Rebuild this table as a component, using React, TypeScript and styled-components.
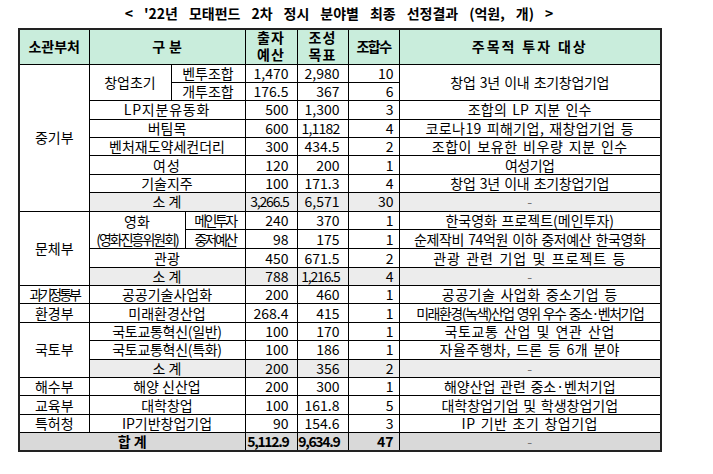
import React from 'react';
import styled, { createGlobalStyle } from 'styled-components';

const Global = createGlobalStyle`
  html, body { margin: 0; padding: 0; background: #fff; }
  body { font-family: "Noto Sans CJK KR", "Noto Sans", sans-serif; color: #000; }
`;

const Page = styled.div`
  width: 713px;
  height: 474px;
  box-sizing: border-box;
  padding: 3px 0 0 18px;
`;

const Title = styled.div`
  width: 642px;
  text-align: center;
  font-weight: 700;
  font-size: 14px;
  line-height: 20px;
  word-spacing: 7.8px;
  margin-bottom: 5px;
`;

const Table = styled.table`
  width: 642px;
  border-collapse: collapse;
  table-layout: fixed;
  border: 2px solid #222;
`;

const Row = styled.tr<{ $h?: number }>`
  height: ${p => p.$h ?? 18.38}px;
`;

type Align = 'left' | 'center' | 'right';
type Shade = 'none' | 'sub' | 'total';

const Th = styled.th<{ $ls?: number }>`
  border: 1px solid #000;
  background: #c9eddc;
  font-family: "Liberation Sans", "Noto Sans CJK KR", sans-serif;
  font-size: 14px;
  line-height: 16.5px;
  font-weight: 700;
  padding: 0;
  text-align: center;
  white-space: nowrap;
  letter-spacing: ${p => p.$ls ?? 0}px;
`;

const Td = styled.td<{ $align?: Align; $shade?: Shade; $ls?: number; $bold?: boolean; $pr?: number; $lh?: number }>`
  border: 1px solid #000;
  font-size: 14px;
  line-height: ${p => p.$lh ?? 17}px;
  padding: 0 ${p => (p.$align === 'right' ? p.$pr ?? 8 : 0)}px 0 0;
  text-align: ${p => p.$align ?? 'center'};
  background: ${p => (p.$shade === 'sub' ? '#ececec' : p.$shade === 'total' ? '#d9d9d9' : '#fff')};
  font-weight: ${p => (p.$bold ? 700 : 400)};
  letter-spacing: ${p => p.$ls ?? 0}px;
  white-space: nowrap;
  overflow: hidden;
`;

const Target = styled(Td)`
  word-spacing: 1.5px;
`;

const Dash = styled.span`
  color: #777;
`;

const Plain = styled.span`
  letter-spacing: 0;
`;

const Num = (props: { v: string; ls?: number; shade?: Shade; bold?: boolean; pr?: number }) => (
  <Td $align="right" $ls={props.ls} $shade={props.shade} $bold={props.bold} $pr={props.pr}>
    {props.v}
  </Td>
);

export default function App() {
  return (
    <>
      <Global />
      <Page>
        <Title>{"< '22년 모태펀드 2차 정시 분야별 최종 선정결과 (억원, 개) >"}</Title>
        <Table>
          <colgroup>
            <col style={{ width: 70 }} />
            <col style={{ width: 82 }} />
            <col style={{ width: 14 }} />
            <col style={{ width: 60 }} />
            <col style={{ width: 52 }} />
            <col style={{ width: 51 }} />
            <col style={{ width: 51 }} />
            <col style={{ width: 262 }} />
          </colgroup>
          <thead>
            <Row $h={35}>
              <Th>소관부처</Th>
              <Th colSpan={3}>구 분</Th>
              <Th $ls={1}>출자<br />예산</Th>
              <Th $ls={1}>조성<br />목표</Th>
              <Th $ls={-1.5}>조합수</Th>
              <Th $ls={2}>주목적 투자 대상</Th>
            </Row>
          </thead>
          <tbody>
            <Row>
              <Td rowSpan={8}>중기부</Td>
              <Td rowSpan={2}>창업초기</Td>
              <Td colSpan={2}>벤투조합</Td>
              <Num v="1,470" />
              <Num v="2,980" />
              <Num v="10" pr={5} />
              <Target rowSpan={2} $ls={-0.3}>창업 3년 이내 초기창업기업</Target>
            </Row>
            <Row>
              <Td colSpan={2}>개투조합</Td>
              <Num v="176.5" />
              <Num v="367" />
              <Num v="6" pr={5} />
            </Row>
            <Row>
              <Td colSpan={3} $ls={0.8}>LP지분유동화</Td>
              <Num v="500" />
              <Num v="1,300" />
              <Num v="3" pr={5} />
              <Target $ls={0.3}>조합의 LP 지분 인수</Target>
            </Row>
            <Row>
              <Td colSpan={3}>버팀목</Td>
              <Num v="600" />
              <Num v="1,1182" ls={-0.8} />
              <Num v="4" pr={5} />
              <Target $ls={0.4}>코로나19 피해기업, 재창업기업 등</Target>
            </Row>
            <Row>
              <Td colSpan={3}>벤처재도약세컨더리</Td>
              <Num v="300" />
              <Num v="434.5" />
              <Num v="2" pr={5} />
              <Target $ls={0.6}>조합이 보유한 비우량 지분 인수</Target>
            </Row>
            <Row>
              <Td colSpan={3} $ls={1}>여성</Td>
              <Num v="120" />
              <Num v="200" />
              <Num v="1" pr={5} />
              <Target $ls={-0.5}>여성기업</Target>
            </Row>
            <Row>
              <Td colSpan={3}>기술지주</Td>
              <Num v="100" />
              <Num v="171.3" />
              <Num v="4" pr={5} />
              <Target $ls={-0.3}>창업 3년 이내 초기창업기업</Target>
            </Row>
            <Row>
              <Td colSpan={3} $shade="sub">소 계</Td>
              <Num v="3,266.5" ls={-1.2} shade="sub" />
              <Num v="6,571" shade="sub" />
              <Num v="30" pr={5} shade="sub" />
              <Target $shade="sub"><Dash>-</Dash></Target>
            </Row>

            <Row>
              <Td rowSpan={4}>문체부</Td>
              <Td colSpan={2} rowSpan={2} $ls={-2} $lh={18.4}>
                <Plain>영화</Plain>
                <br />
                (영화진흥위원회)
              </Td>
              <Td $ls={-2.5}>메인투자</Td>
              <Num v="240" />
              <Num v="370" />
              <Num v="1" pr={5} />
              <Target>한국영화 프로젝트(메인투자)</Target>
            </Row>
            <Row>
              <Td $ls={-2.5}>중저예산</Td>
              <Num v="98" />
              <Num v="175" />
              <Num v="1" pr={5} />
              <Target $ls={-0.4}>순제작비 74억원 이하 중저예산 한국영화</Target>
            </Row>
            <Row>
              <Td colSpan={3}>관광</Td>
              <Num v="450" />
              <Num v="671.5" />
              <Num v="2" pr={5} />
              <Target $ls={0.9}>관광 관련 기업 및 프로젝트 등</Target>
            </Row>
            <Row>
              <Td colSpan={3} $shade="sub">소 계</Td>
              <Num v="788" shade="sub" />
              <Num v="1,216.5" ls={-1.2} shade="sub" />
              <Num v="4" pr={5} shade="sub" />
              <Target $shade="sub"><Dash>-</Dash></Target>
            </Row>

            <Row>
              <Td $ls={-3}>과기정통부</Td>
              <Td colSpan={3}>공공기술사업화</Td>
              <Num v="200" />
              <Num v="460" />
              <Num v="1" pr={5} />
              <Target $ls={0.5}>공공기술 사업화 중소기업 등</Target>
            </Row>
            <Row>
              <Td>환경부</Td>
              <Td colSpan={3}>미래환경산업</Td>
              <Num v="268.4" />
              <Num v="415" />
              <Num v="1" pr={5} />
              <Target $ls={-1.5}>미래환경(녹색)산업 영위 우수 중소·벤처기업</Target>
            </Row>

            <Row>
              <Td rowSpan={3}>국토부</Td>
              <Td colSpan={3} $ls={-0.3}>국토교통혁신(일반)</Td>
              <Num v="100" />
              <Num v="170" />
              <Num v="1" pr={5} />
              <Target $ls={0.7}>국토교통 산업 및 연관 산업</Target>
            </Row>
            <Row>
              <Td colSpan={3} $ls={-0.3}>국토교통혁신(특화)</Td>
              <Num v="100" />
              <Num v="186" />
              <Num v="1" pr={5} />
              <Target $ls={0.5}>자율주행차, 드론 등 6개 분야</Target>
            </Row>
            <Row>
              <Td colSpan={3} $shade="sub">소 계</Td>
              <Num v="200" shade="sub" />
              <Num v="356" shade="sub" />
              <Num v="2" pr={5} shade="sub" />
              <Target $shade="sub"><Dash>-</Dash></Target>
            </Row>

            <Row>
              <Td>해수부</Td>
              <Td colSpan={3}>해양 신산업</Td>
              <Num v="200" />
              <Num v="300" />
              <Num v="1" pr={5} />
              <Target>해양산업 관련 중소·벤처기업</Target>
            </Row>
            <Row>
              <Td>교육부</Td>
              <Td colSpan={3}>대학창업</Td>
              <Num v="100" />
              <Num v="161.8" />
              <Num v="5" pr={5} />
              <Target>대학창업기업 및 학생창업기업</Target>
            </Row>
            <Row>
              <Td>특허청</Td>
              <Td colSpan={3}>IP기반창업기업</Td>
              <Num v="90" />
              <Num v="154.6" />
              <Num v="3" pr={5} />
              <Target $ls={0.5}>IP 기반 초기 창업기업</Target>
            </Row>
            <Row>
              <Td colSpan={4} $shade="total" $bold>합 계</Td>
              <Num v="5,112.9" ls={-1.3} shade="total" bold />
              <Num v="9,634.9" ls={-1.3} shade="total" bold />
              <Num v="47" pr={5} shade="total" bold />
              <Target $shade="total"><Dash>-</Dash></Target>
            </Row>
          </tbody>
        </Table>
      </Page>
    </>
  );
}
